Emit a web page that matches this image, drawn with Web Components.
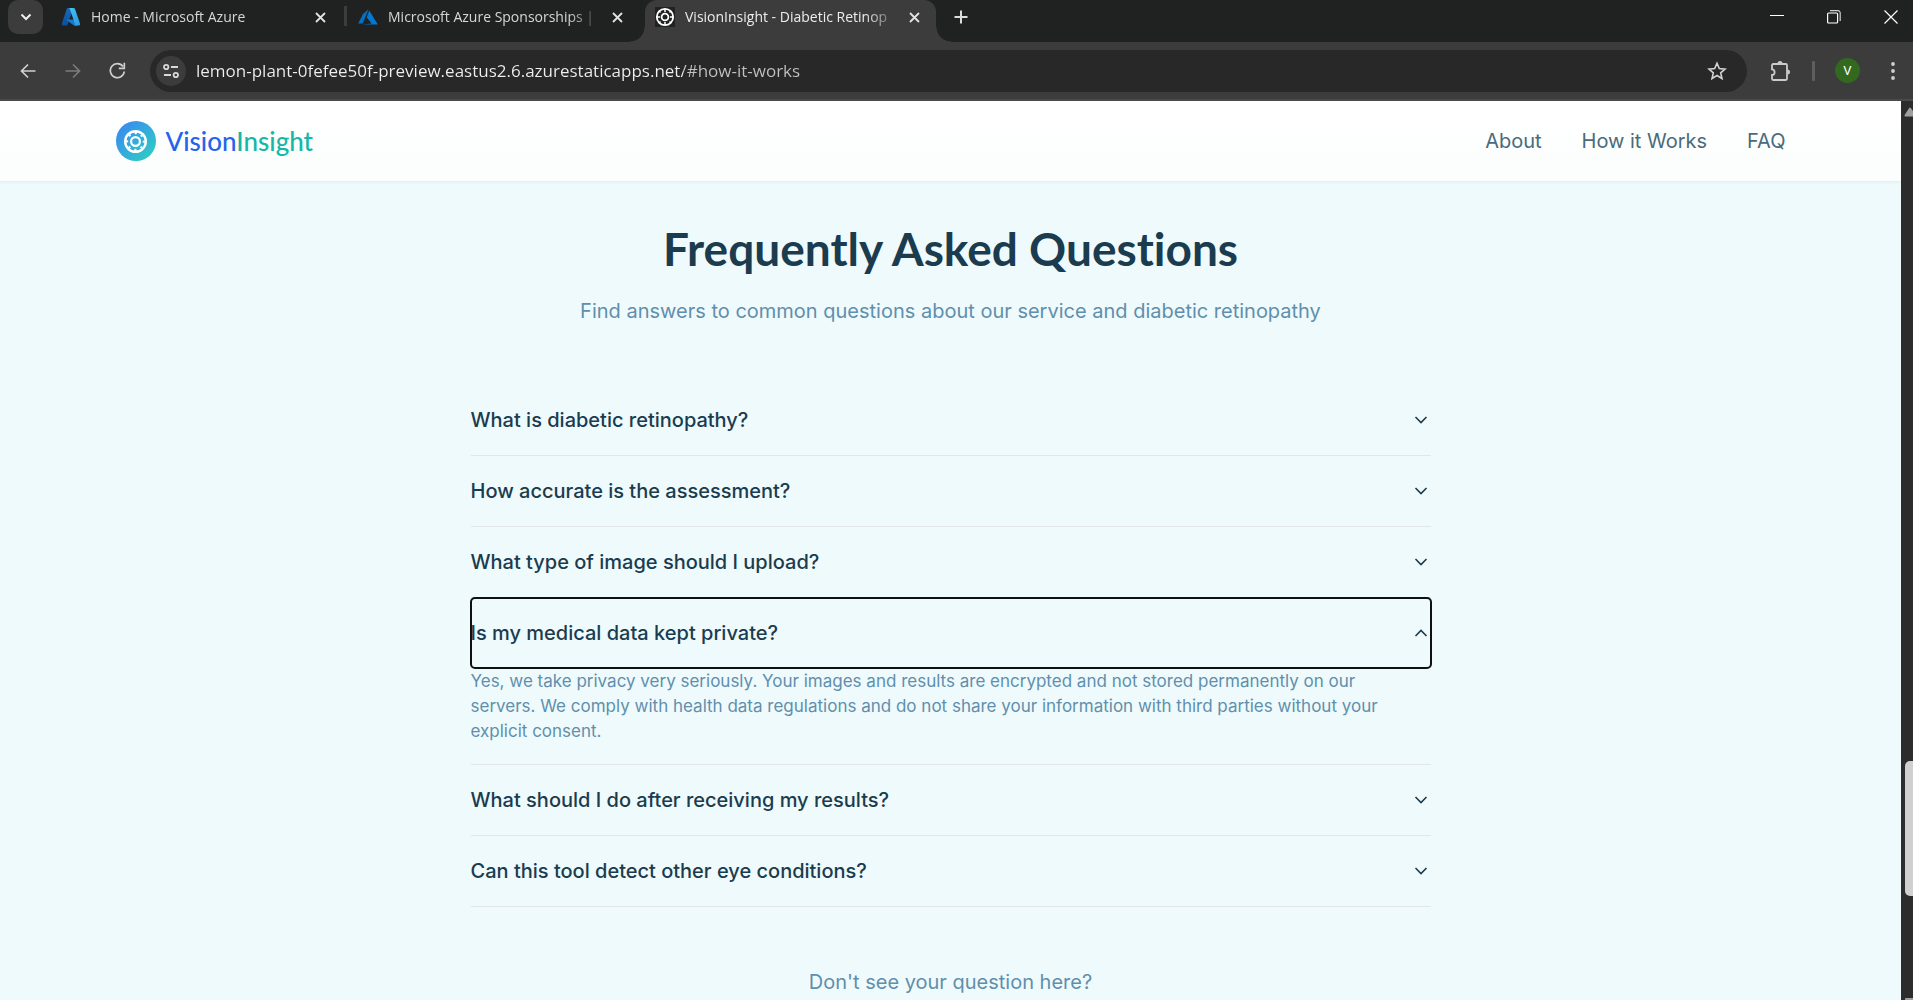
<!DOCTYPE html>
<html lang="en">
<head>
<meta charset="utf-8">
<title>VisionInsight - Diabetic Retinopathy</title>
<style>
  body { margin: 0; background: #effafc; }
</style>
</head>
<body>
<browser-window>
  <tab-strip slot="tabs">
    <browser-tab label="Home - Microsoft Azure">
      <svg slot="icon" width="20" height="20" viewBox="0 0 20 20" aria-hidden="true">
        <defs>
          <linearGradient id="az1" x1="0" y1="0" x2="0" y2="1"><stop offset="0" stop-color="#1668b8"/><stop offset="1" stop-color="#0b4f98"/></linearGradient>
          <linearGradient id="az2" x1="0" y1="0" x2="1" y2="1"><stop offset="0" stop-color="#46c6f4"/><stop offset="1" stop-color="#2a93e0"/></linearGradient>
        </defs>
        <path d="M7 1h5.500L6.600 17.600c-.2.6-.7.9-1.300.9H2c-.9 0-1.500-.8-1.200-1.700L5.700 2c.2-.6.7-1 1.300-1Z" fill="url(#az1)"/>
        <path d="M6 12.500h9l1 5.900h-3L6 13.500Z" fill="#1478d4"/>
        <path d="M7.600 1h5.100c.6 0 1.100.4 1.300.9l5.100 14.900c.3.8-.3 1.700-1.200 1.700h-5.200c.9 0 1.500-.8 1.200-1.700L8.900 1.900C8.700 1.400 8.200 1 7.600 1Z" fill="url(#az2)"/>
      </svg>
    </browser-tab>
    <browser-tab label="Microsoft Azure Sponsorships |" divided>
      <svg slot="icon" width="20" height="20" viewBox="0 0 20 20" aria-hidden="true">
        <path d="M10.600 2.200 5 7 .2 16.500h4.500Z" fill="#0072c6"/>
        <path d="M11.300 3.600 8.700 10.500l5 6-9.400 1.100H19.800Z" fill="#0078d4"/>
      </svg>
    </browser-tab>
    <browser-tab label="VisionInsight - Diabetic Retinop" active>
      <svg slot="icon" width="20" height="20" viewBox="0 0 20 20" aria-hidden="true">
        <rect width="20" height="20" fill="#202221"/>
        <circle cx="10" cy="10" r="8.200" fill="none" stroke="#fff" stroke-width="1.800"/>
        <circle cx="10" cy="10" r="3.400" fill="none" stroke="#fff" stroke-width="1.800"/>
        <path d="M10 2v3M10 15v3M2 10h3M15 10h3M4.300 4.300l1.200 1.200M14.500 14.500l1.200 1.200M15.700 4.300l-1.200 1.200M5.500 14.500l-1.200 1.200" stroke="#fff" stroke-width="1.500"/>
      </svg>
    </browser-tab>
  </tab-strip>
  <tool-bar slot="toolbar" url="lemon-plant-0fefee50f-preview.eastus2.6.azurestaticapps.net/#how-it-works"></tool-bar>
  <site-header></site-header>
  <faq-section>
    <span slot="title">Frequently Asked Questions</span>
    <span slot="lead">Find answers to common questions about our service and diabetic retinopathy</span>
    <faq-item question="What is diabetic retinopathy?"></faq-item>
    <faq-item question="How accurate is the assessment?"></faq-item>
    <faq-item question="What type of image should I upload?"></faq-item>
    <faq-item question="Is my medical data kept private?" open>Yes, we take privacy very seriously. Your images and results are encrypted and not stored permanently on our servers. We comply with health data regulations and do not share your information with third parties without your explicit consent.</faq-item>
    <faq-item question="What should I do after receiving my results?"></faq-item>
    <faq-item question="Can this tool detect other eye conditions?"></faq-item>
    <span slot="more">Don't see your question here?</span>
  </faq-section>
</browser-window>

<script>
const mount = (host, markup) => {
  const t = document.createElement('template');
  t.innerHTML = markup;
  host.attachShadow({ mode: 'open' }).append(t.content.cloneNode(true));
};
const reset = `
  :host, *, *::before, *::after { box-sizing: border-box; }
  button { appearance: none; border: 0; padding: 0; margin: 0; background: none; color: inherit; font: inherit; display: grid; place-items: center; }
  svg { display: block; }
`;

customElements.define('browser-window', class extends HTMLElement {
  constructor() {
    super();
    mount(this, `<style>${reset}
      :host { display: flex; flex-direction: column; height: 100vh; overflow: hidden; font-family: Inter, sans-serif; }
      .view { flex: 1; display: flex; min-height: 0; }
      .page { flex: 1; min-width: 0; overflow: hidden; background: #effafc; }
    </style>
    <slot name="tabs"></slot>
    <slot name="toolbar"></slot>
    <div class="view"><div class="page"><slot></slot></div><scroll-rail></scroll-rail></div>`);
  }
});

customElements.define('scroll-rail', class extends HTMLElement {
  constructor() {
    super();
    mount(this, `<style>${reset}
      :host { display: flex; flex-direction: column; width: 12px; background: #2c2c2c; overflow: hidden; }
      svg { flex: none; margin: 6px 0 0 3px; }
      .track { flex: 1; display: grid; grid-template-rows: 643fr 135fr 101fr; padding-left: 4px; }
      .thumb { grid-row: 2; width: 12px; border-radius: 5px; background: #d0d0d0; }
      .down { margin-top: 0; }
    </style>
    <svg width="12" height="10" viewBox="0 0 12 10"><path d="M6 1.500 10.500 8.500h-9Z" fill="#9f9f9f" stroke="#9f9f9f" stroke-width="2" stroke-linejoin="round"/></svg>
    <div class="track"><div class="thumb"></div></div>
    <svg class="down" width="12" height="3" viewBox="0 0 12 3"><path d="M2 2h10v2H3Z" fill="#9f9f9f" stroke="#9f9f9f" stroke-width="2" stroke-linejoin="round"/></svg>`);
  }
});

customElements.define('tab-strip', class extends HTMLElement {
  constructor() {
    super();
    mount(this, `<style>${reset}
      :host { display: flex; height: 42px; flex: none; background: #202221; color: #e8e8e8; overflow: hidden; }
      .search { width: 35px; height: 34px; margin: 0 8px; border-radius: 10px; background: #3c3c3c; flex: none; }
      .tabs { display: flex; gap: 6px; }
      .add { width: 50px; height: 33px; }
      .controls { margin-left: auto; display: flex; height: 33px; align-items: center; }
      .controls button { width: 57px; height: 33px; }
      .controls .last { width: 45px; margin-left: 6px; }
    </style>
    <button class="search" aria-label="Search tabs"><svg width="12" height="8" viewBox="0 0 12 8"><path d="m1.500 1.500 4.500 4.500 4.500-4.500" fill="none" stroke="#f0f0f0" stroke-width="2"/></svg></button>
    <div class="tabs"><slot></slot></div>
    <button class="add" aria-label="New tab"><svg width="14" height="14" viewBox="0 0 14 14"><path d="M7 .5v13M.5 7h13" stroke="#dcdcdc" stroke-width="2"/></svg></button>
    <div class="controls">
      <button aria-label="Minimize"><svg width="14" height="14" viewBox="0 0 14 14"><path d="M0 5.500h14" stroke="#fff"/></svg></button>
      <button aria-label="Restore"><svg width="14" height="14" viewBox="0 0 14 14"><rect x=".6" y="3" width="10" height="10" rx="1" fill="none" stroke="#fff" stroke-width="1.200"/><path d="M3 .7h8a2.200 2.200 0 0 1 2.200 2.200v8" fill="none" stroke="#d0d0d0" stroke-width="1.200"/></svg></button>
      <button class="last" aria-label="Close window"><svg width="14" height="14" viewBox="0 0 14 14"><path d="m.5.5 13 13m0-13-13 13" stroke="#fff" stroke-width="1.200"/></svg></button>
    </div>`);
  }
});

customElements.define('browser-tab', class extends HTMLElement {
  constructor() {
    super();
    mount(this, `<style>${reset}
      :host { display: flex; align-items: center; position: relative; width: 291px; height: 42px; padding: 0 16px 8px 10px; font: 14px/20px "Open Sans", sans-serif; color: #d6d6d6; }
      ::slotted(svg) { display: block; flex: none; margin-right: 10px; }
      .label { flex: none; width: 215px; white-space: nowrap; mask-image: linear-gradient(90deg, #000 180px, transparent 215px); }
      button { margin-left: auto; width: 11px; height: 20px; }
      :host([active]) { background: #3c3c3c; border-radius: 12px 12px 0 0; color: #ececec; }
      :host([active])::before, :host([active])::after { content: ""; position: absolute; bottom: 0; width: 15px; height: 15px; }
      :host([active])::before { right: 100%; background: radial-gradient(circle at 0 0, transparent 14px, #3c3c3c 15px); }
      :host([active])::after { left: 100%; background: radial-gradient(circle at 100% 0, transparent 14px, #3c3c3c 15px); }
      .rule { display: none; position: absolute; left: -4px; top: 6px; width: 3px; height: 20px; background: #3c3c3c; }
      :host([divided]) .rule { display: block; }
    </style>
    <i class="rule"></i><slot name="icon"></slot><span class="label"></span>
    <button aria-label="Close tab"><svg width="11" height="11" viewBox="0 0 11 11"><path d="m1 1 9 9m0-9-9 9" stroke="#e2e2e2" stroke-width="1.800"/></svg></button>`);
    this.shadowRoot.querySelector('.label').textContent = this.getAttribute('label');
  }
});

customElements.define('tool-bar', class extends HTMLElement {
  constructor() {
    super();
    mount(this, `<style>${reset}
      :host { display: flex; align-items: center; height: 59px; flex: none; padding: 0 5px; background: #3c3c3c; border-bottom: 2px solid #4a4a4a; color: #c9c9c9; }
      .nav { display: flex; margin-right: 10px; }
      .nav button { width: 45px; height: 42px; }
      .omni { flex: 1; min-width: 0; display: flex; align-items: center; height: 42px; padding: 0 15px 0 6px; border-radius: 21px; background: #282828; }
      .site { width: 30px; height: 30px; border-radius: 50%; background: #3c3c3c; flex: none; }
      input { appearance: none; flex: 1; min-width: 0; height: 40px; border: 0; outline: 0; padding: 0; margin: 0 10px;
        font: 17px/24px "Open Sans", sans-serif; color: #e8e8e8; background: linear-gradient(90deg, #f0f0f0 487px, #c2c2c2 487px); background-clip: text; -webkit-text-fill-color: transparent; }
      .star { width: 30px; height: 30px; }
      .ext { width: 40px; height: 40px; margin-left: 14px; }
      .bar { width: 3px; height: 20px; margin: 0 20px 0 11px; border-radius: 1px; background: #5e5e5e; }
      .me { width: 25px; height: 25px; border-radius: 50%; background: #33691e; color: #fff; font: 13px/25px Roboto, sans-serif; }
      .menu { width: 30px; height: 40px; margin-left: 18px; }
    </style>
    <div class="nav">
      <button aria-label="Back"><svg width="16" height="16" viewBox="0 0 16 16"><path d="M15.500 8H2M8 1.500 1.500 8 8 14.500" fill="none" stroke="#d0d0d0" stroke-width="1.700"/></svg></button>
      <button aria-label="Forward"><svg width="16" height="16" viewBox="0 0 16 16"><path d="M.5 8H14M8 1.500 14.500 8 8 14.500" fill="none" stroke="#7c7c7c" stroke-width="1.700"/></svg></button>
      <button aria-label="Reload"><svg width="17" height="17" viewBox="0 0 17 17"><path d="M14 4.500A7 7 0 1 0 15.300 9.500" fill="none" stroke="#cfcfcf" stroke-width="1.700"/><path d="M15.300.8v5.500H9.800" fill="none" stroke="#cfcfcf" stroke-width="1.700"/></svg></button>
    </div>
    <div class="omni">
      <button class="site" aria-label="View site information"><svg width="16" height="16" viewBox="0 0 16 16"><g fill="none" stroke="#d8d8d8" stroke-width="1.800"><circle cx="3.200" cy="4" r="2.200"/><path d="M8 4h7M1 12h7"/><circle cx="12.800" cy="12" r="2.200"/></g></svg></button>
      <input type="text" aria-label="Address" spellcheck="false">
      <button class="star" aria-label="Bookmark this tab"><svg width="20" height="20" viewBox="0 0 20 20"><path d="m10 2.300 2.300 5.300 5.700.5-4.300 3.800 1.300 5.600-5-3-5 3 1.300-5.600L2 8.100l5.700-.5Z" fill="none" stroke="#d2d2d2" stroke-width="1.600"/></svg></button>
    </div>
    <button class="ext" aria-label="Extensions"><svg width="22" height="22" viewBox="0 0 22 22"><path d="M3.200 4h12.600a1.200 1.200 0 0 1 1.200 1.200v13.600a1.200 1.200 0 0 1-1.200 1.200H3.200A1.200 1.200 0 0 1 2 18.800V15c1.500 0 2.600-1.200 2.600-2.800S3.500 9.300 2 9.300V5.200A1.200 1.200 0 0 1 3.200 4Z" fill="none" stroke="#cbcbcb" stroke-width="1.800"/><path d="M7.500 3.500a2.500 2.500 0 0 1 5 0ZM17.500 9.500a2.500 2.500 0 0 1 0 5Z" fill="#cbcbcb"/></svg></button>
    <i class="bar"></i>
    <button class="me" aria-label="Profile">V</button>
    <button class="menu" aria-label="Menu"><svg width="4" height="18" viewBox="0 0 4 18" fill="#cfcfcf"><circle cx="2" cy="2" r="1.900"/><circle cx="2" cy="9" r="1.900"/><circle cx="2" cy="16" r="1.900"/></svg></button>`);
    this.shadowRoot.querySelector('input').value = this.getAttribute('url');
  }
});

customElements.define('site-header', class extends HTMLElement {
  constructor() {
    super();
    mount(this, `<style>${reset}
      :host { display: block; position: relative; background: linear-gradient(#fff, #fbfefd); border-bottom: 1px solid #e6eff1; box-shadow: 0 1px 2px rgba(20, 60, 80, .04); }
      .row { display: flex; align-items: center; justify-content: space-between; max-width: 1750px; height: 80px; margin: 0 auto; padding: 0 40px; }
      a { text-decoration: none; color: #4a6b7a; }
      .brand { display: flex; align-items: center; gap: 10px; font: 500 26px/35px Lato, sans-serif; color: #2563eb; }
      .brand b { font-weight: inherit; color: #14b8a6; }
      nav { display: flex; gap: 40px; font-size: 20px; line-height: 30px; }
    </style>
    <div class="row">
      <a class="brand" href="#">
        <svg width="40" height="40" viewBox="0 0 40 40" aria-hidden="true">
          <defs><linearGradient id="g" x1="0" y1="0" x2="1" y2="1"><stop offset="0" stop-color="#3b82f6"/><stop offset="1" stop-color="#2dd4bf"/></linearGradient></defs>
          <circle cx="20" cy="20" r="20" fill="url(#g)"/>
          <circle cx="19.500" cy="20.500" r="10.300" fill="none" stroke="#fff" stroke-width="2.400"/>
          <circle cx="19.500" cy="20.500" r="4.400" fill="none" stroke="#fff" stroke-width="2.200"/>
          <circle cx="19.500" cy="20.500" r="8.400" fill="none" stroke="#fff" stroke-width="2.200" stroke-dasharray="2.200 4.397" stroke-dashoffset="1.100"/>
        </svg>
        <span>Vision<b>Insight</b></span>
      </a>
      <nav><a href="#about">About</a><a href="#how-it-works">How it Works</a><a href="#faq">FAQ</a></nav>
    </div>`);
  }
});

customElements.define('faq-section', class extends HTMLElement {
  constructor() {
    super();
    mount(this, `<style>${reset}
      :host { display: block; padding: 42px 40px; color: #5f8fad; font-size: 20px; line-height: 35px; text-align: center; }
      h2 { margin: 0 0 20px; font: 700 46px/50px Lato, sans-serif; font-variant-ligatures: none; color: #1a3c4e; }
      p { margin: 0; }
      .list { max-width: 960px; margin: 56px auto 58px; text-align: left; }
    </style>
    <h2><slot name="title"></slot></h2>
    <p><slot name="lead"></slot></p>
    <div class="list"><slot></slot></div>
    <p><slot name="more"></slot></p>`);
  }
});

customElements.define('faq-item', class extends HTMLElement {
  constructor() {
    super();
    mount(this, `<style>${reset}
      :host { display: block; border-bottom: 1px solid #e2e6ea; }
      h3 { margin: 0; }
      button { display: flex; align-items: center; justify-content: space-between; width: 100%; height: 70px; font: 500 20px/30px Inter, sans-serif; color: #1a3c4e; text-align: left; padding-right: 3px; }
      .answer { display: none; padding: 1px 24px 20px 0; font-size: 17px; line-height: 25px; }
      :host([open]) .answer { display: block; }
      :host([open]) svg { transform: rotate(180deg); }
      :host([open]) button { outline: 2px solid #101010; outline-offset: -1px; border-radius: 4px; }
    </style>
    <h3><button><span></span><svg width="14" height="10" viewBox="0 0 14 10"><path d="m1.500 2 5.500 5.500L12.500 2" fill="none" stroke="#1a3c4e" stroke-width="1.600"/></svg></button></h3>
    <div class="answer"><slot></slot></div>`);
    this.shadowRoot.querySelector('span').textContent = this.getAttribute('question');
    const button = this.shadowRoot.querySelector('button');
    button.setAttribute('aria-expanded', this.hasAttribute('open'));
    button.addEventListener('click', () => {
      button.setAttribute('aria-expanded', this.toggleAttribute('open'));
    });
  }
});
</script>
</body>
</html>
